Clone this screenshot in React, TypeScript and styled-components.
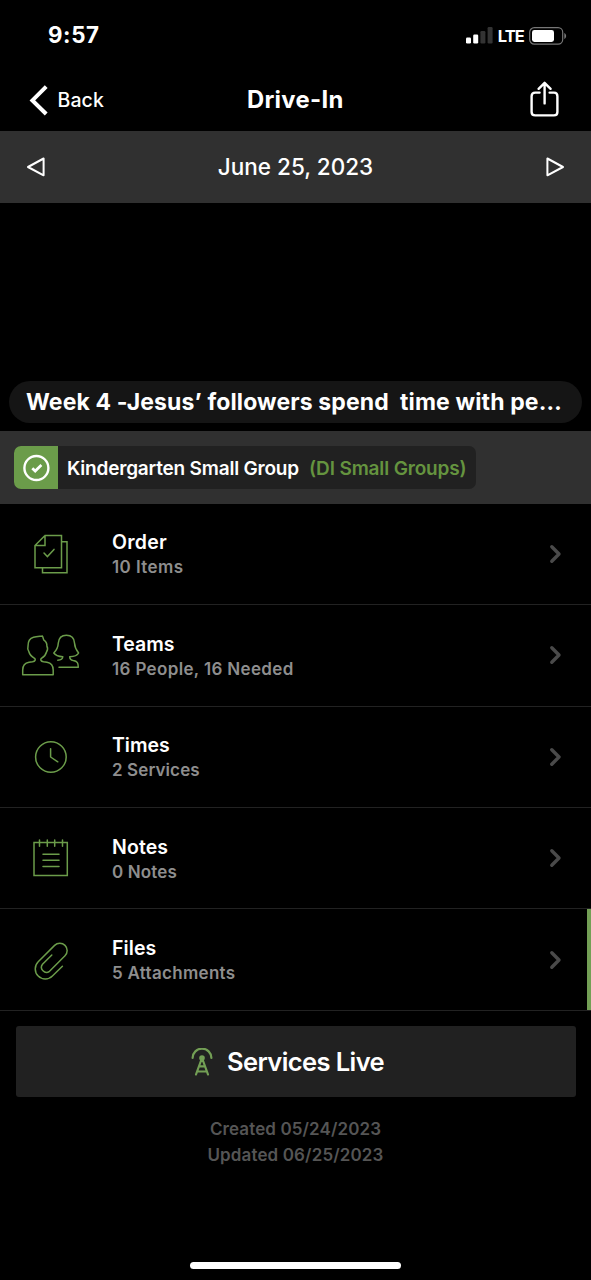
import React from "react";
import styled, { createGlobalStyle } from "styled-components";

const GREEN = "#6b9c4a";

const GlobalStyle = createGlobalStyle`
  * { box-sizing: border-box; }
  body { margin: 0; background: #000; }
`;

const Screen = styled.main`
  width: 591px;
  height: 1280px;
  display: flex;
  flex-direction: column;
  overflow: hidden;
  background: #000;
  color: #fff;
  font-family: Inter, "Liberation Sans", sans-serif;
`;

const Label = styled.span<{ $size: number; $weight?: number; $spacing?: number; $color?: string; $line?: number }>`
  font-size: ${(p) => p.$size}px;
  font-weight: ${(p) => p.$weight ?? 500};
  letter-spacing: ${(p) => p.$spacing ?? 0}px;
  line-height: ${(p) => p.$line ?? 26}px;
  color: ${(p) => p.$color ?? "#fff"};
  white-space: pre;
`;

const Icon = styled.svg`
  display: block;
  flex: none;
  fill: none;
`;

const StatusBar = styled.header`
  height: 70px;
  padding: 0 24px 0 48px;
  display: flex;
  align-items: center;
  justify-content: space-between;
`;

const StatusIcons = styled.div`
  display: flex;
  align-items: center;
  gap: 5px;
  padding-top: 1px;
`;

const NavBar = styled.nav`
  height: 61px;
  padding: 0 31px 2px 28.5px;
  display: grid;
  grid-template-columns: 1fr auto 1fr;
  align-items: center;
`;

const BackButton = styled.a`
  display: flex;
  align-items: center;
  gap: 9px;
`;

const NavTitle = styled.h1`
  margin: 0 0 0 2px;
  display: flex;
`;

const ShareButton = styled.a`
  justify-self: end;
  padding-bottom: 1px;
`;

const DateBar = styled.section`
  height: 72px;
  padding: 0 26px;
  display: flex;
  align-items: center;
  justify-content: space-between;
  background: #303030;
`;

const Hero = styled.section`
  height: 228.4px;
  padding: 0 9px 8.5px;
  display: flex;
  align-items: flex-end;
`;

const TitlePill = styled.div`
  width: 100%;
  height: 41.5px;
  padding: 0 17px;
  display: flex;
  align-items: center;
  border-radius: 21px;
  background: #151515;
`;

const TagBand = styled.section`
  height: 72.4px;
  padding: 0 14px;
  display: flex;
  align-items: center;
  background: #303030;
`;

const Tag = styled.div`
  height: 43.5px;
  width: 462px;
  display: flex;
  align-items: center;
  gap: 9px;
  overflow: hidden;
  border-radius: 7px;
  background: #212121;
`;

const TagCheck = styled.div`
  width: 44px;
  height: 100%;
  display: grid;
  place-items: center;
  background: ${GREEN};
`;

const TagText = styled.div`
  display: flex;
  gap: 10px;
  padding-top: 2px;
`;

const Row = styled.section<{ $marked?: boolean }>`
  height: 101.4px;
  padding: 0 28px 0 21px;
  display: flex;
  align-items: center;
  border-bottom: 1px solid #222;
  ${(p) => p.$marked && `box-shadow: inset -4px 0 0 #739f55;`}
`;

const RowText = styled.div`
  flex: 1;
  margin-left: 31px;
  padding-top: 1.8px;
  display: flex;
  flex-direction: column;
`;

const LiveButton = styled.div`
  margin: 15.6px 15.5px 0;
  height: 70.5px;
  padding-right: 16px;
  display: flex;
  align-items: center;
  justify-content: center;
  gap: 14px;
  border-radius: 3px;
  background: #212121;
`;

const Footer = styled.footer`
  margin-top: 19px;
  display: flex;
  flex: 1;
  flex-direction: column;
  align-items: center;
`;

const HomeIndicator = styled.div`
  width: 211px;
  height: 7px;
  margin: auto 0 11.5px;
  border-radius: 4px;
  background: #fff;
`;

const ListIcon = ({ children }: { children: React.ReactNode }) => (
  <Icon width="60" height="60" viewBox="0 0 60 60" stroke={GREEN} strokeWidth="1.5" strokeLinecap="round" strokeLinejoin="round">
    {children}
  </Icon>
);

const rows = [
  {
    title: "Order",
    detail: "10 Items",
    titleSpacing: 0.25,
    detailSpacing: 0.4,
    icon: (
      <g strokeLinejoin="miter">
        <path d="M24 11.5H40.5V43.7H14V21.5ZM24 11.5V21.5H14M41 17.8H46V48.8H21.5V44" />
        <path d="M23 29l3.4 3.6 6.6-7.2" />
      </g>
    ),
  },
  {
    title: "Teams",
    detail: "16 People, 16 Needed",
    titleSpacing: 0,
    detailSpacing: 0.35,
    icon: (
      <>
        <path d="M1.7 49.8V45C1.7 40.5 4 37.9 8 37.2L11.5 36.7C14.4 36.2 14.8 34.6 13.6 33.4C10.4 31.6 8.6 29.6 7.9 26.8C6.6 25.2 6.5 23 7 21.2C6.9 16 8.8 13.2 12.5 12.3C15.5 11.5 18.6 11.3 21.3 10.9C22.2 12.2 22.1 13.9 22.9 15.2C25.2 16.6 26 18.8 25.9 21.2C26.9 23 26.6 25.3 25.5 27C24.8 29.8 23.2 31.8 20.4 33.4C19.2 34.6 19.6 36.2 22.5 36.7L26 37.2C30 37.9 32.2 40.5 32.2 45V49.8Z" />
        <path d="M36.8 35.3C39.5 35.2 41.6 34 41.8 31.8C37.5 31.5 34.4 30.4 32.8 28C35.8 25 37.1 21.8 37.3 18C37.8 12.7 40.5 10.2 45.4 10.2C50.3 10.2 53.2 12.8 53.5 18C53.7 22 55 24.8 57.6 28C56.4 30.4 53 31.6 48.7 31.8C48.7 34 49.8 35.1 52.2 35.6C56.5 36.3 57.3 38 57.3 42.3H38" />
      </>
    ),
  },
  {
    title: "Times",
    detail: "2 Services",
    titleSpacing: 0,
    detailSpacing: 0.1,
    icon: (
      <>
        <circle cx="29.9" cy="30" r="15.3" />
        <path d="M29.6 21.8V30L36.8 34.8" />
      </>
    ),
  },
  {
    title: "Notes",
    detail: "0 Notes",
    titleSpacing: 0.1,
    detailSpacing: 0.15,
    icon: (
      <path
        strokeLinejoin="miter"
        d="M13 14.6H46.3V47.5H13ZM18.5 12v6.3M26.3 12v6.3M33.7 12v6.3M41.5 12v6.3M22 26.3H38M22 32.3H38M22 38.5H38"
      />
    ),
  },
  {
    title: "Files",
    detail: "5 Attachments",
    titleSpacing: 0.1,
    detailSpacing: 0.3,
    marked: true,
    icon: (
      <path d="M41.4 36.3L31.4 46A10 10 0 0 1 17.2 31.8L33.6 15.4A7.3 7.3 0 0 1 44 25.8L28.5 41.3A5 5 0 0 1 21.5 34.3L30.8 25" />
    ),
  },
];

export default function App() {
  return (
    <>
      <GlobalStyle />
      <Screen>
        <StatusBar>
          <Label $size={22.3} $weight={700} $spacing={0.6}>9:57</Label>
          <StatusIcons>
            <Icon width="27" height="17" viewBox="0 0 27 17">
              <rect x="0" y="10.5" width="5" height="6" rx="1.2" fill="#fff" />
              <rect x="7.2" y="7.5" width="5" height="9" rx="1.2" fill="#fff" />
              <rect x="14.4" y="4" width="5" height="12.5" rx="1.2" fill="#333" />
              <rect x="21.6" y="0" width="5" height="16.5" rx="1.2" fill="#333" />
            </Icon>
            <Label $size={16.5} $weight={700} $spacing={-0.9}>LTE</Label>
            <Icon width="38" height="18" viewBox="0 0 38 18">
              <rect x=".7" y=".7" width="33" height="16.4" rx="4.6" stroke="#777" strokeWidth="1.2" />
              <rect x="3" y="3" width="22" height="12" rx="2.4" fill="#fff" />
              <path d="M35.3 6C37.7 7 37.7 11 35.3 12Z" fill="#777" />
            </Icon>
          </StatusIcons>
        </StatusBar>

        <NavBar>
          <BackButton>
            <Icon width="20" height="32" viewBox="0 0 20 32" stroke="#fff" strokeWidth="4">
              <path d="M17.2 2.6L3.4 16.4 17.2 30" />
            </Icon>
            <Label $size={19.5} $weight={500} $spacing={0.1}>Back</Label>
          </BackButton>
          <NavTitle>
            <Label $size={23.8} $weight={700} $spacing={0.3}>Drive-In</Label>
          </NavTitle>
          <ShareButton>
            <Icon width="30" height="36" viewBox="0 0 30 36" stroke="#fff" strokeWidth="2.4" strokeLinecap="round" strokeLinejoin="round">
              <path d="M9.6 11.6H5.2Q1.6 11.6 1.6 15.2V31Q1.6 34.4 5.2 34.4H24Q27.4 34.4 27.4 31V15.2Q27.4 11.6 24 11.6H19.6" />
              <path d="M14.6 22.4V2.4M8.6 7.8L14.6 1.8L20.6 7.8" />
            </Icon>
          </ShareButton>
        </NavBar>

        <DateBar>
          <Icon width="20" height="20" viewBox="0 0 20 20" stroke="#fff" strokeWidth="2" strokeLinejoin="round">
            <path d="M2 10L17.6 1.5V18.3Z" />
          </Icon>
          <Label $size={22.5}>June 25, 2023</Label>
          <Icon width="20" height="20" viewBox="0 0 20 20" stroke="#fff" strokeWidth="2" strokeLinejoin="round">
            <path d="M18 10L2.4 1.5V18.3Z" />
          </Icon>
        </DateBar>

        <Hero>
          <TitlePill>
            <Label $size={23} $weight={700} $spacing={0.13}>{"Week 4 -Jesus’ followers spend  time with pe…"}</Label>
          </TitlePill>
        </Hero>

        <TagBand>
          <Tag>
            <TagCheck>
              <Icon width="28" height="28" viewBox="0 0 28 28" stroke="#fff" strokeWidth="2.4">
                <circle cx="14.4" cy="14" r="12" />
                <path d="M10.3 14.2L13.2 17L19.4 11" strokeWidth="2.7" />
              </Icon>
            </TagCheck>
            <TagText>
              <Label $size={19} $weight={600} $spacing={-0.2}>Kindergarten Small Group</Label>
              <Label $size={19} $weight={600} $spacing={-0.15} $color="#65943f">(DI Small Groups)</Label>
            </TagText>
          </Tag>
        </TagBand>

        {rows.map((row) => (
          <Row key={row.title} $marked={row.marked}>
            <ListIcon>{row.icon}</ListIcon>
            <RowText>
              <Label $size={19.5} $weight={600} $line={25} $spacing={row.titleSpacing}>{row.title}</Label>
              <Label $size={17} $weight={600} $line={24} $color="#8e8e8e" $spacing={row.detailSpacing}>{row.detail}</Label>
            </RowText>
            <Icon width="14" height="20" viewBox="0 0 14 20" stroke="#4a4a4a" strokeWidth="3.4" strokeLinecap="round" strokeLinejoin="round">
              <path d="M2.8 2.8L10 10L2.8 17.2" />
            </Icon>
          </Row>
        ))}

        <LiveButton>
          <Icon width="22" height="28" viewBox="0 0 22 28" stroke="#739f55" strokeWidth="2.2" strokeLinecap="round">
            <path d="M1.6 10A9.4 9.4 0 0 1 20.4 10" />
            <circle cx="11" cy="10" r="2.8" fill="#739f55" stroke="none" />
            <path d="M10.6 11L5 26.5M11.4 11L17 26.5M8.6 18.3H13.4M6.6 23.5H15.4" />
          </Icon>
          <Label $size={25.5} $weight={600} $spacing={-0.6}>Services Live</Label>
        </LiveButton>

        <Footer>
          <Label $size={17} $weight={600} $spacing={0.1} $color="#555">Created 05/24/2023</Label>
          <Label $size={17} $weight={600} $spacing={0.13} $color="#555">Updated 06/25/2023</Label>
          <HomeIndicator />
        </Footer>
      </Screen>
    </>
  );
}
